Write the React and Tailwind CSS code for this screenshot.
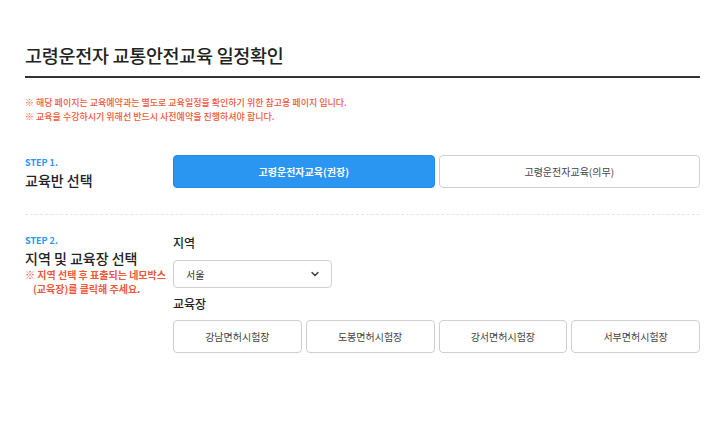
import { ChevronDown } from 'lucide-react'

const centers = ['강남면허시험장', '도봉면허시험장', '강서면허시험장', '서부면허시험장']

export default function App() {
  return (
    <div className="min-h-screen bg-white text-[#222] pl-[25px] pr-[20px] pt-[42px]" style={{ fontFamily: '"Noto Sans CJK KR", "Noto Sans", sans-serif' }}>
      {/* Title */}
      <h1 className="text-[18.5px] leading-[26px] font-medium tracking-[-0.3px] pb-[8px] border-b-[2px] border-[#333]">
        고령운전자 교통안전교육 일정확인
      </h1>

      {/* Notice */}
      <div className="mt-[18px] text-[9px] leading-[14px] font-medium text-[#f0583a]">
        <p>※ 해당 페이지는 교육예약과는 별도로 교육일정을 확인하기 위한 참고용 페이지 입니다.</p>
        <p>※ 교육을 수강하시기 위해선 반드시 사전예약을 진행하셔야 합니다.</p>
      </div>

      {/* Step 1 */}
      <div className="flex mt-[31px] pb-[24px] border-b border-dashed border-[#e5e5e5]">
        <div className="w-[148px] pt-[2px]">
          <p className="text-[9px] leading-[12px] font-bold text-[#2b96f1]">STEP 1.</p>
          <p className="text-[14px] leading-[20px] font-medium mt-[1px]">교육반 선택</p>
        </div>
        <div className="flex-1 grid grid-cols-2 gap-[4px]">
          <button className="h-[33px] rounded-[4px] bg-[#2b96f1] border border-[#2489e0] text-white text-[10px] font-bold">
            고령운전자교육(권장)
          </button>
          <button className="h-[33px] rounded-[4px] bg-white border border-[#cfcfcf] text-[#444] text-[10px]">
            고령운전자교육(의무)
          </button>
        </div>
      </div>

      {/* Step 2 */}
      <div className="flex pt-[20px]">
        <div className="w-[148px]">
          <p className="text-[9px] leading-[12px] font-bold text-[#2b96f1]">STEP 2.</p>
          <p className="text-[14px] leading-[20px] font-medium mt-[1px]">지역 및 교육장 선택</p>
          <p className="text-[10px] leading-[14px] font-bold text-[#f0583a] whitespace-nowrap">
            ※ 지역 선택 후 표출되는 네모박스
            <br />
            <span className="pl-[8px]">(교육장)를 클릭해 주세요.</span>
          </p>
        </div>
        <div className="flex-1">
          <p className="text-[12px] leading-[18px] font-medium mt-[-1px]">지역</p>
          <div className="mt-[8px] w-[159px] h-[28px] rounded-[4px] border border-[#cfcfcf] flex items-center justify-between pl-[12px] pr-[10px]">
            <span className="text-[10px] text-[#333]">서울</span>
            <ChevronDown className="w-[12px] h-[12px] text-[#333]" strokeWidth={2.5} />
          </div>
          <p className="text-[12px] leading-[18px] font-medium mt-[7px]">교육장</p>
          <div className="mt-[7px] grid grid-cols-4 gap-[4px]">
            {centers.map((c) => (
              <button key={c} className="h-[33px] rounded-[4px] bg-white border border-[#cfcfcf] text-[#444] text-[10px]">
                {c}
              </button>
            ))}
          </div>
        </div>
      </div>
    </div>
  )
}
